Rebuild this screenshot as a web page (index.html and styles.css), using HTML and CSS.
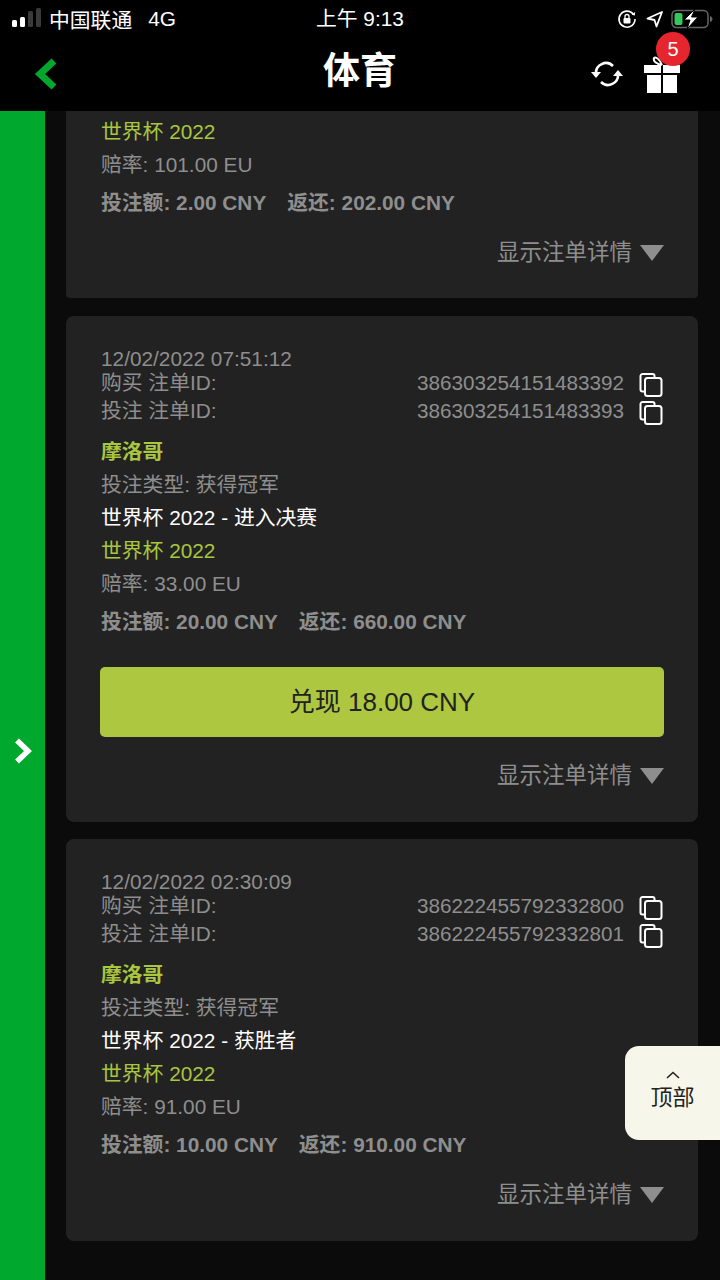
FILE: index.html
```html
<!DOCTYPE html>
<html>
<head>
    <meta name="viewport" content="width=device-width" />
    <meta http-equiv="Content-Type" content="text/html; charset=utf-8" />
    <title>体育</title>
    <link rel="stylesheet" href="styles.css">
</head>
<body>
<div class="statusbar">
    <div class="status-left">
        <svg class="signal" width="32" height="20" viewBox="0 0 32 20">
            <rect x="0" y="12" width="5" height="7" rx="1.5" fill="#fff"/>
            <rect x="8" y="9" width="5" height="10" rx="1.5" fill="#fff"/>
            <rect x="16" y="3" width="5" height="16" rx="1.5" fill="#3a3a3a"/>
            <rect x="24" y="0" width="5" height="19" rx="1.5" fill="#3a3a3a"/>
        </svg>
        <span class="carrier">中国联通</span>
        <span class="network">4G</span>
    </div>
    <div class="status-time">上午 9:13</div>
    <div class="status-right">
        <svg width="20" height="20" viewBox="0 0 20 20">
            <path d="M16.500 5.500A8 8 0 1 0 18 10" fill="none" stroke="#fff" stroke-width="1.600"/>
            <path d="M14.500 5.800l3.400.6.2-3.400z" fill="#fff"/>
            <rect x="6.500" y="9" width="7" height="5.500" rx="1" fill="#fff"/>
            <path d="M8 9V7.500a2 2 0 0 1 4 0V9" fill="none" stroke="#fff" stroke-width="1.300"/>
        </svg>
        <svg width="18" height="18" viewBox="0 0 18 18">
            <path d="M1.500 8.500L16 2l-5.500 14.500-2-6.500z" fill="none" stroke="#fff" stroke-width="1.800" stroke-linejoin="round"/>
        </svg>
        <svg class="battery" width="42" height="20" viewBox="0 0 42 20">
            <rect x="1" y="1.500" width="36" height="17" rx="4.500" fill="none" stroke="#666" stroke-width="1.500"/>
            <rect x="3.500" y="4" width="8" height="12" rx="2" fill="#35c759"/>
            <path d="M39 7v6c1.500-.5 2.500-1.500 2.500-3S40.500 7.500 39 7z" fill="#666"/>
            <path d="M24 0L13 11h6l-3 9 11-12h-6.500z" fill="#fff" stroke="#000" stroke-width="1"/>
        </svg>
    </div>
</div>

<header class="topbar">
    <svg class="back" width="24" height="32" viewBox="0 0 24 32">
        <path d="M20 3L6 16l14 13" fill="none" stroke="#00a82d" stroke-width="7"/>
    </svg>
    <h1>体育</h1>
    <svg class="refresh" width="32" height="28" viewBox="0 0 32 28">
        <path d="M5 14a10 10 0 0 1 17-8" fill="none" stroke="#fff" stroke-width="2.600"/>
        <path d="M27 14a10 10 0 0 1-17 8" fill="none" stroke="#fff" stroke-width="2.600"/>
        <path d="M0 12h10l-5 6z" fill="#fff"/>
        <path d="M22 16h10l-5-6z" fill="#fff"/>
    </svg>
    <svg class="gift" width="36" height="38" viewBox="0 0 36 38">
        <path d="M18 9C12 8 9 5 10 2c2-2 6 2 8 7" fill="none" stroke="#fff" stroke-width="2"/>
        <rect x="0" y="9" width="17" height="8" fill="#fff"/>
        <rect x="19" y="9" width="17" height="8" fill="#fff"/>
        <rect x="3" y="19" width="14" height="18" fill="#fff"/>
        <rect x="19" y="19" width="14" height="18" fill="#fff"/>
    </svg>
    <span class="badge">5</span>
</header>

<div class="main">
    <aside class="sidebar">
        <svg width="20" height="26" viewBox="0 0 20 26">
            <path d="M4 2.500L15 13 4 23.500" fill="none" stroke="#fff" stroke-width="5.500"/>
        </svg>
    </aside>
    <div class="list">
        <section class="card card-cut">
            <div class="league">世界杯 2022</div>
            <div class="line">赔率: 101.00 EU</div>
            <div class="stakes"><span>投注额: 2.00 CNY</span><span>返还: 202.00 CNY</span></div>
            <div class="details">显示注单详情<i class="caret"></i></div>
        </section>

        <section class="card">
            <div class="date">12/02/2022 07:51:12</div>
            <div class="idrow"><span>购买 注单ID:</span><span class="idval">386303254151483392</span>
                <svg class="copy" width="24" height="24" viewBox="0 0 24 24"><path d="M5 18.500H3.500a2 2 0 0 1-2-2V3a2 2 0 0 1 2-2h10a2 2 0 0 1 2 2v1.500" fill="none" stroke="#fff" stroke-width="2"/><rect x="6" y="5" width="16.500" height="18" rx="2.500" fill="none" stroke="#fff" stroke-width="2"/></svg>
            </div>
            <div class="idrow"><span>投注 注单ID:</span><span class="idval">386303254151483393</span>
                <svg class="copy" width="24" height="24" viewBox="0 0 24 24"><path d="M5 18.500H3.500a2 2 0 0 1-2-2V3a2 2 0 0 1 2-2h10a2 2 0 0 1 2 2v1.500" fill="none" stroke="#fff" stroke-width="2"/><rect x="6" y="5" width="16.500" height="18" rx="2.500" fill="none" stroke="#fff" stroke-width="2"/></svg>
            </div>
            <div class="team">摩洛哥</div>
            <div class="line">投注类型: 获得冠军</div>
            <div class="market">世界杯 2022 - 进入决赛</div>
            <div class="league">世界杯 2022</div>
            <div class="line">赔率: 33.00 EU</div>
            <div class="stakes"><span>投注额: 20.00 CNY</span><span>返还: 660.00 CNY</span></div>
            <button class="cashout">兑现 18.00 CNY</button>
            <div class="details">显示注单详情<i class="caret"></i></div>
        </section>

        <section class="card">
            <div class="date">12/02/2022 02:30:09</div>
            <div class="idrow"><span>购买 注单ID:</span><span class="idval">386222455792332800</span>
                <svg class="copy" width="24" height="24" viewBox="0 0 24 24"><path d="M5 18.500H3.500a2 2 0 0 1-2-2V3a2 2 0 0 1 2-2h10a2 2 0 0 1 2 2v1.500" fill="none" stroke="#fff" stroke-width="2"/><rect x="6" y="5" width="16.500" height="18" rx="2.500" fill="none" stroke="#fff" stroke-width="2"/></svg>
            </div>
            <div class="idrow"><span>投注 注单ID:</span><span class="idval">386222455792332801</span>
                <svg class="copy" width="24" height="24" viewBox="0 0 24 24"><path d="M5 18.500H3.500a2 2 0 0 1-2-2V3a2 2 0 0 1 2-2h10a2 2 0 0 1 2 2v1.500" fill="none" stroke="#fff" stroke-width="2"/><rect x="6" y="5" width="16.500" height="18" rx="2.500" fill="none" stroke="#fff" stroke-width="2"/></svg>
            </div>
            <div class="team">摩洛哥</div>
            <div class="line">投注类型: 获得冠军</div>
            <div class="market">世界杯 2022 - 获胜者</div>
            <div class="league">世界杯 2022</div>
            <div class="line">赔率: 91.00 EU</div>
            <div class="stakes"><span>投注额: 10.00 CNY</span><span>返还: 910.00 CNY</span></div>
            <div class="details">显示注单详情<i class="caret"></i></div>
        </section>
    </div>
</div>

<a class="totop">
    <svg width="14" height="8" viewBox="0 0 14 8"><path d="M1 7l6-5.500L13 7" fill="none" stroke="#222" stroke-width="1.600"/></svg>
    <span>顶部</span>
</a>
</body>
</html>
```
FILE: styles.css
```css
html, body {
    margin: 0;
    height: 1280px;
    overflow: hidden;
    background: #000;
}

body {
    position: relative;
    color: #8e8e8e;
    font-family: "Liberation Sans", "Noto Sans CJK SC", sans-serif;
    font-size: 20.8px;
}

.statusbar {
    height: 37px;
    display: flex;
    align-items: center;
    justify-content: space-between;
    padding: 0 8px 0 12px;
    color: #fff;
    font-size: 20.8px;
    position: relative;
}

.status-left {
    display: flex;
    align-items: center;
}

.signal {
    margin: 0 5px 2px 0;
}

.carrier {
    margin-right: 16px;
}

.status-time {
    position: absolute;
    left: 316px;
    top: 5px;
    line-height: 27px;
}

.status-right {
    display: flex;
    align-items: center;
    gap: 9px;
}

.status-right .battery {
    margin-left: -2px;
    margin-right: -1px;
}

.topbar {
    height: 74px;
    position: relative;
    display: flex;
    align-items: center;
    padding-left: 34px;
}

.topbar h1 {
    position: absolute;
    left: 0;
    right: 0;
    top: 11px;
    margin: 0;
    text-align: center;
    color: #fff;
    font-size: 37px;
    font-weight: bold;
    line-height: 47px;
}

.refresh {
    margin-left: 533px;
}

.gift {
    margin-left: 21px;
    margin-top: 2px;
}

.badge {
    position: absolute;
    left: 656px;
    top: -5px;
    width: 34px;
    height: 34px;
    border-radius: 50%;
    background: #e5262f;
    color: #fff;
    font-size: 20px;
    line-height: 34px;
    text-align: center;
}

.main {
    height: 1169px;
    display: flex;
    background: #0b0b0b;
    overflow: hidden;
}

.sidebar {
    width: 45px;
    flex: none;
    background: #00a82d;
    display: flex;
    align-items: center;
    justify-content: center;
    padding-top: 110px;
    box-sizing: border-box;
}

.list {
    margin-left: 21px;
    width: 632px;
    display: flex;
    flex-direction: column;
    gap: 18px;
}

.card {
    background: #222;
    border-radius: 8px;
    padding: 31px 35px 0;
    height: 506px;
    box-sizing: border-box;
    line-height: 33px;
}

.card + .card + .card {
    height: 402px;
    margin-top: -1px;
}

.card-cut {
    height: 187px;
    padding-top: 4px;
    border-radius: 0 0 4px 4px;
    flex: none;
}

.date {
    line-height: 24px;
}

.idrow {
    display: flex;
    align-items: center;
    line-height: 28px;
    position: relative;
    top: -2px;
}

.idrow + .idrow {
    margin-bottom: 8px;
}

.idval {
    margin-left: auto;
    margin-right: 15px;
    font-size: 20.7px;
}

.copy {
    position: relative;
    top: 2px;
}

.team {
    color: #a9c63f;
    font-weight: bold;
}

.market {
    color: #fff;
}

.league {
    color: #a9c63f;
}

.stakes {
    font-weight: bold;
    margin-top: 5px;
    display: flex;
    gap: 21px;
}

.cashout {
    display: block;
    width: calc(100% + 2px);
    margin: 29px -1px 0;
    height: 70px;
    padding: 0 0 5px;
    border: 0;
    border-radius: 5px;
    background: #adc741;
    color: #222;
    font-family: inherit;
    font-size: 26px;
}

.details {
    margin: 22px -1px 0 0;
    display: flex;
    align-items: center;
    justify-content: flex-end;
    font-size: 22.5px;
}

.stakes + .details {
    margin-top: 17px;
}

.caret {
    margin-left: 8px;
    width: 0;
    height: 0;
    border-left: 12px solid transparent;
    border-right: 12px solid transparent;
    border-top: 16px solid #8e8e8e;
}

.totop {
    position: absolute;
    left: 625px;
    top: 1046px;
    width: 95px;
    height: 94px;
    background: #f6f6ea;
    border-radius: 14px 0 0 14px;
    color: #222;
    font-size: 22px;
    display: flex;
    flex-direction: column;
    align-items: center;
    padding-top: 24px;
    box-sizing: border-box;
    line-height: 30px;
}

.totop svg {
    margin: 1px 0 4px;
}
```
